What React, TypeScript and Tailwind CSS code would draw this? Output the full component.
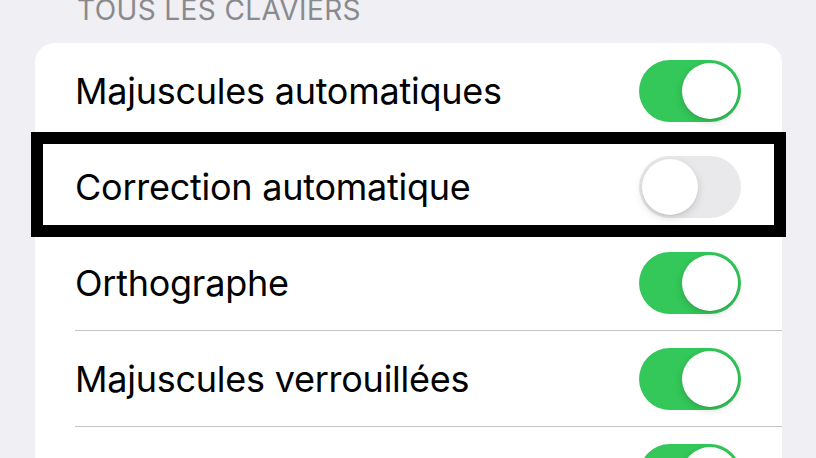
import React from 'react';

const rows: { label: string; on: boolean }[] = [
    { label: 'Majuscules automatiques', on: true },
    { label: 'Correction automatique', on: false },
    { label: 'Orthographe', on: true },
    { label: 'Majuscules verrouillées', on: true },
    { label: 'Raccourcis', on: true },
];

const Toggle: React.FC<{ on: boolean }> = ({ on }) => (
    <div className={`w-[102px] h-[62px] rounded-full p-[3px] flex shrink-0 ${on ? 'bg-[#34c759] justify-end' : 'bg-[#e9e9eb] justify-start'}`}>
        <div className="w-[56px] h-[56px] rounded-full bg-white shadow-[0_3px_8px_rgba(0,0,0,0.15),0_1px_1px_rgba(0,0,0,0.06)]" />
    </div>
);

export default function App() {
    return (
        <div className="relative w-[816px] h-[458px] overflow-hidden bg-[#efeff4] font-['Inter',sans-serif]">
            <div className="pl-[77px] -mt-[5px] mb-[18px] text-[28px] leading-[30px] text-[#8a8a8e] tracking-[0.4px]">
                TOUS LES CLAVIERS
            </div>
            <div className="ml-[35px] w-[747px] bg-white rounded-[20px]">
                {rows.map((r, i) => (
                    <div key={r.label} className={`ml-[40px] pr-[41px] h-[96px] flex items-center justify-between ${i < rows.length - 1 ? 'border-b border-[#c6c6c8]' : ''}`}>
                        <span className="text-[36px] text-black tracking-[-0.25px]">{r.label}</span>
                        <Toggle on={r.on} />
                    </div>
                ))}
            </div>
            <div className="absolute left-[31px] top-[132px] w-[755px] h-[105px] border-[12px] border-black" />
        </div>
    );
}
